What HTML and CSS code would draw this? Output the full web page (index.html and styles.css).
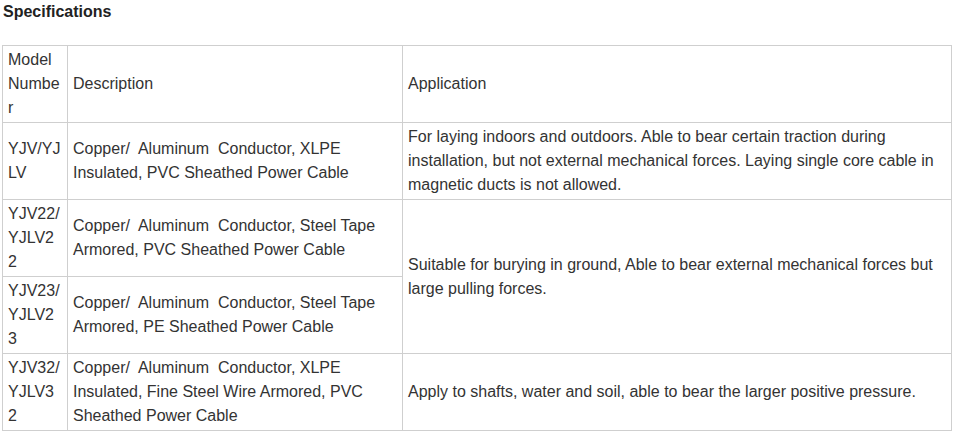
FILE: index.html
```html
<!DOCTYPE html>
<html>
<head>
<meta charset="utf-8">
<link rel="stylesheet" href="styles.css">
</head>
<body>
<div class="page">
  <h3 class="title">Specifications</h3>
  <table class="spec">
    <colgroup>
      <col class="c-model">
      <col class="c-desc">
      <col class="c-app">
    </colgroup>
    <tr>
      <td>Model Number</td>
      <td>Description</td>
      <td>Application</td>
    </tr>
    <tr>
      <td>YJV/YJLV</td>
      <td>Copper/&nbsp; Aluminum&nbsp; Conductor, XLPE Insulated, PVC Sheathed Power Cable</td>
      <td>For laying indoors and outdoors. Able to bear certain traction during installation, but not external mechanical forces. Laying single core cable in magnetic ducts is not allowed.</td>
    </tr>
    <tr>
      <td>YJV22/ YJLV22</td>
      <td>Copper/&nbsp; Aluminum&nbsp; Conductor, Steel Tape Armored, PVC Sheathed Power Cable</td>
      <td rowspan="2">Suitable for burying in ground, Able to bear external mechanical forces but large pulling forces.</td>
    </tr>
    <tr>
      <td>YJV23/ YJLV23</td>
      <td>Copper/&nbsp; Aluminum&nbsp; Conductor, Steel Tape Armored, PE Sheathed Power Cable</td>
    </tr>
    <tr>
      <td>YJV32/ YJLV32</td>
      <td>Copper/&nbsp; Aluminum&nbsp; Conductor, XLPE Insulated, Fine Steel Wire Armored, PVC Sheathed Power Cable</td>
      <td>Apply to shafts, water and soil, able to bear the larger positive pressure.</td>
    </tr>
  </table>
</div>
</body>
</html>
```

FILE: styles.css
```css
html, body {
  margin: 0;
  padding: 0;
  background: #fff;
}
.page {
  padding: 0 0 0 2px;
  font-family: "Liberation Sans", Arial, sans-serif;
  color: #333;
}
.title {
  margin: 0;
  padding: 0 0 0 1px;
  font-size: 16px;
  line-height: 24px;
  font-weight: bold;
  color: #222;
}
.spec {
  margin-top: 21px;
  border-collapse: collapse;
  table-layout: fixed;
  width: 949px;
  font-size: 16px;
  line-height: 24px;
}
.c-model { width: 65px; }
.c-desc { width: 335px; }
.c-app { width: 549px; }
.spec td {
  border: 1px solid #cfcfcf;
  padding: 2px 5px 2px 5px;
  vertical-align: middle;
  height: 72px;
  word-break: break-all;
}
.spec td:nth-child(n+2) {
  word-break: normal;
}
```
